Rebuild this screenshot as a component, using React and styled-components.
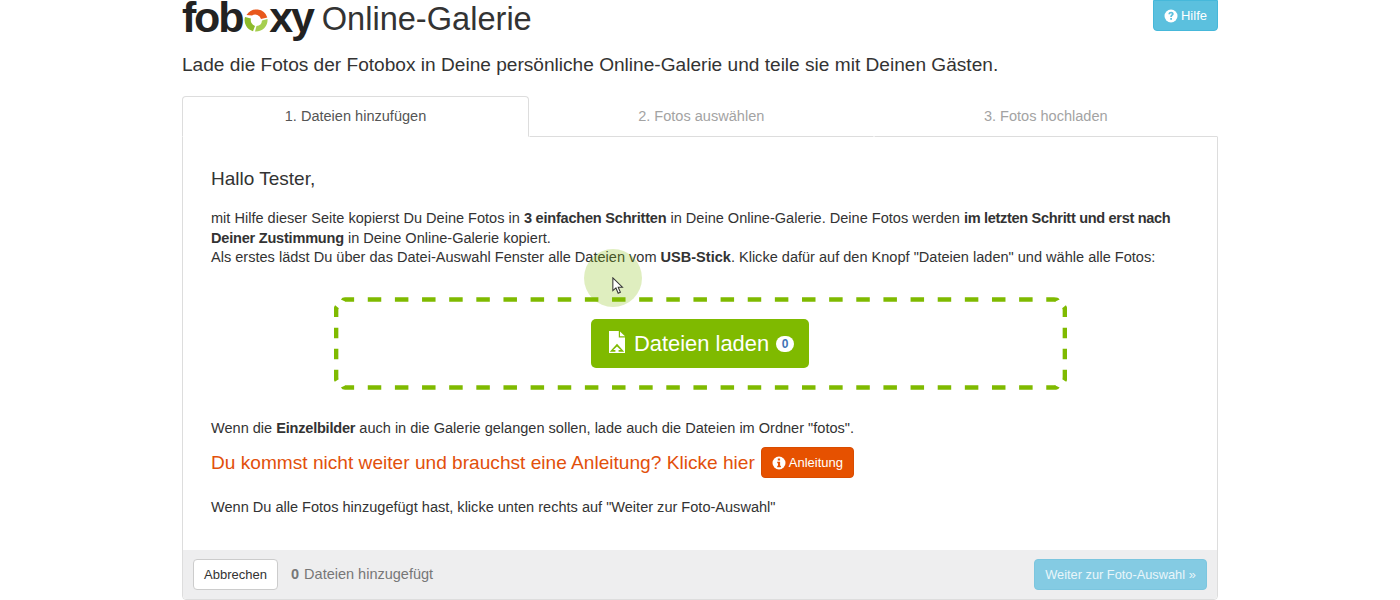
import React from 'react';
import styled, { createGlobalStyle } from 'styled-components';

const GlobalStyle = createGlobalStyle`
  html, body {
    margin: 0;
    padding: 0;
    background: #fff;
    overflow: hidden;
  }
  body {
    font-family: "Liberation Sans", Arial, sans-serif;
    font-size: 14.55px;
    line-height: 19.6px;
    color: #333;
  }
`;

const Page = styled.div`
  position: relative;
  width: 1036px;
  height: 600px;
  margin: 0 auto;
`;

const Header = styled.header`
  display: flex;
  justify-content: space-between;
  align-items: flex-start;
  height: 41px;
`;

const Brand = styled.div`
  display: flex;
  align-items: flex-start;
  gap: 9px;
`;

const Logo = styled.span`
  display: inline-flex;
  align-items: baseline;
  margin-top: 1px;
  font-weight: 700;
  font-size: 43px;
  line-height: 32px;
  letter-spacing: -2.2px;
  color: #222;
`;

const LogoRing = styled.svg`
  width: 26px;
  height: 24px;
  margin: 0 0.5px;
`;

const Title = styled.h1`
  margin: 3px 0 0;
  font-weight: 400;
  font-size: 32.6px;
  line-height: 32px;
  color: #333;
`;

const BaseButton = styled.button`
  display: inline-flex;
  align-items: center;
  justify-content: center;
  font-family: inherit;
  box-sizing: border-box;
  border-radius: 4px;
  border: 1px solid transparent;
  padding: 0;
`;

const HelpButton = styled(BaseButton)`
  width: 65px;
  height: 31px;
  gap: 3px;
  border-radius: 0 0 4px 4px;
  background: #5bc0de;
  border-color: #46b8da;
  color: #fff;
  font-size: 13px;
`;

const Lead = styled.p`
  margin: 12px 0 0;
  font-size: 19.1px;
  line-height: 24px;
  color: #333;
`;

const Tabs = styled.div`
  display: grid;
  grid-template-columns: 347px 1fr 1fr;
  margin-top: 19px;
  height: 41px;
`;

const Tab = styled.div`
  display: flex;
  align-items: center;
  justify-content: center;
  box-sizing: border-box;
  color: ${(p) => (p.$active ? '#555' : '#a3a3a3')};
  background: #fff;
  border: 1px solid ${(p) => (p.$active ? '#ddd' : 'transparent')};
  border-bottom: 1px solid ${(p) => (p.$active ? '#fff' : '#ddd')};
  border-radius: ${(p) => (p.$active ? '4px 4px 0 0' : '0')};
  position: relative;
  z-index: 1;
`;

const Panel = styled.section`
  box-sizing: border-box;
  height: 464px;
  margin-top: -1px;
  border: 1px solid #ddd;
  border-radius: 0 0 4px 4px;
  display: flex;
  flex-direction: column;
`;

const PanelBody = styled.div`
  flex: 1;
  padding: 30px 28px 0;
`;

const Greeting = styled.h3`
  margin: 0 0 18px;
  font-weight: 400;
  font-size: 19px;
  line-height: 24px;
  color: #333;
`;

const Paragraph = styled.p`
  margin: 0;
`;

const Strong = styled.b`
  letter-spacing: ${(p) => p.$spacing ?? -0.22}px;
`;

const DropZone = styled.div`
  position: relative;
  display: flex;
  align-items: center;
  justify-content: center;
  width: 733px;
  height: 93px;
  margin: 29px auto;
`;

const DashFrame = styled.svg`
  position: absolute;
  inset: 0;
  width: 100%;
  height: 100%;
  fill: none;
  stroke: #7fba00;
  stroke-width: 4.7;
`;

const LoadButton = styled(BaseButton)`
  position: relative;
  justify-content: flex-start;
  width: 218px;
  height: 49px;
  gap: 7px;
  padding: 2px 0 0 17.5px;
  border: 0;
  border-radius: 5px;
  background: #7fba00;
  color: #fff;
  font-size: 21.9px;
`;

const Counter = styled.span`
  display: inline-flex;
  align-items: center;
  justify-content: center;
  width: 18px;
  height: 16px;
  border-radius: 8px;
  background: #fff;
  color: #3f73b5;
  font-size: 12px;
  font-weight: 700;
`;

const GuideRow = styled.div`
  display: flex;
  align-items: center;
  gap: 6px;
  margin-top: 9px;
  color: #e2500b;
  font-size: 19.13px;
  line-height: 31px;
`;

const GuideButton = styled(BaseButton)`
  width: 93px;
  height: 31px;
  gap: 3px;
  background: #e65100;
  border-color: #d94c00;
  color: #fff;
  font-size: 13px;
`;

const Closing = styled.p`
  margin: 20px 0 0;
`;

const Footer = styled.footer`
  display: flex;
  align-items: center;
  box-sizing: border-box;
  height: 49px;
  padding: 0 10px;
  background: #eeeeef;
  border-radius: 0 0 4px 4px;
`;

const CancelButton = styled(BaseButton)`
  width: 85px;
  height: 31px;
  background: #fff;
  border-color: #ccc;
  color: #333;
  font-size: 13px;
`;

const FileCount = styled.span`
  margin-left: 13px;
  color: #777;
  font-size: 14.5px;

  b {
    margin-right: 1px;
  }
`;

const NextButton = styled(BaseButton)`
  width: 173px;
  height: 31px;
  margin-left: auto;
  background: #84cbe3;
  border-color: #7cc6df;
  color: #e9f6fa;
  font-size: 12.8px;
`;

const ClickHalo = styled.div`
  position: absolute;
  left: 402px;
  top: 249px;
  width: 58px;
  height: 58px;
  border-radius: 50%;
  background: rgba(127, 186, 0, 0.25);
  pointer-events: none;
  z-index: 2;
`;

const Pointer = styled.svg`
  position: absolute;
  left: 430px;
  top: 277px;
  width: 12px;
  height: 18px;
  pointer-events: none;
  z-index: 3;
`;

const Glyph = styled.svg`
  width: ${(p) => p.$w}px;
  height: ${(p) => p.$h}px;
  margin: ${(p) => p.$margin || 0};
  flex: none;
`;

// round badge used by the help and guide buttons
const BadgeIcon = ({ mark }) => (
  <Glyph $w={14} $h={14} viewBox="0 0 14 14">
    <circle cx="7" cy="7" r="6.5" fill="#fff" />
    {mark === 'info' ? (
      <path d="M5.8 2.6h2.3v2H5.8zM5.2 5.8h2.9v4h.8v1.5H5.2V9.8h.8v-2.5h-.8z" fill="#e65100" />
    ) : (
      <path
        d="M4.4 5.2c.1-1.6 1.2-2.4 2.7-2.4s2.6.9 2.6 2.1c0 1.6-1.8 1.7-1.8 3H6.2c0-2 1.6-2 1.6-2.9 0-.4-.3-.7-.8-.7s-.8.3-.9 1zM6.2 9h1.8v1.8H6.2z"
        fill="#5bc0de"
      />
    )}
  </Glyph>
);

const FileUpIcon = () => (
  <Glyph $w={16} $h={22} $margin="-5px 2.5px 0 0" viewBox="0 0 16 22">
    <path fill="#fff" d="M0 0h9.8v6.6H16V22H0z" />
    <path fill="#fff" d="M11 .4 16 5.2h-5z" />
    <path fill="#7fba00" d="M.8 20.8 8 12.8l7.2 8z" />
    <path fill="#fff" d="M8 15.4 11.8 19H9.6v3H6.4v-3H4.2z" />
  </Glyph>
);

const App = () => {
  return (
    <>
      <GlobalStyle />
      <Page>
        <Header>
          <Brand>
            <Logo>
              fob
              <LogoRing viewBox="0 0 26 24">
                <path d="M3.5 7A11.5 11.5 0 0 1 24.3 9.5L18 11A6 6 0 0 0 9 7.6Z" fill="#e8591c" />
                <path d="M2 9 8 10.5A6 6 0 0 0 12 17.9L10 23.2A11.5 11.5 0 0 1 2 9Z" fill="#8dbb2a" />
                <path d="M24.5 11A11.5 11.5 0 0 1 12 23.5L13.5 18A6 6 0 0 0 19 12.5Z" fill="#a6cf50" />
              </LogoRing>
              xy
            </Logo>
            <Title>Online-Galerie</Title>
          </Brand>
          <HelpButton>
            <BadgeIcon mark="help" />
            Hilfe
          </HelpButton>
        </Header>
        <Lead>Lade die Fotos der Fotobox in Deine persönliche Online-Galerie und teile sie mit Deinen Gästen.</Lead>
        <Tabs>
          <Tab $active>1. Dateien hinzufügen</Tab>
          <Tab>2. Fotos auswählen</Tab>
          <Tab>3. Fotos hochladen</Tab>
        </Tabs>
        <Panel>
          <PanelBody>
            <Greeting>Hallo Tester,</Greeting>
            <Paragraph>
              mit Hilfe dieser Seite kopierst Du Deine Fotos in <Strong>3 einfachen Schritten</Strong> in Deine
              Online-Galerie. Deine Fotos werden <Strong $spacing={-0.32}>im letzten Schritt und erst nach</Strong>{' '}
              <Strong>Deiner Zustimmung</Strong> in Deine Online-Galerie kopiert.
              <br />
              Als erstes lädst Du über das Datei-Auswahl Fenster alle Dateien vom{' '}
              <Strong $spacing={0}>USB-Stick</Strong>. Klicke dafür auf den Knopf "Dateien laden" und wähle alle Fotos:
            </Paragraph>
            <DropZone>
              <DashFrame viewBox="0 0 733 93">
                <path strokeDasharray="13.5 13.64" strokeDashoffset="2.14" d="M9 3.5Q9.5 2.5 11 2.5H720Q723 2.5 723.5 3.5" />
                <path strokeDasharray="13.5 13.64" strokeDashoffset="2.14" d="M9 89.5Q9.5 90.5 11 90.5H720Q723 90.5 723.5 89.5" />
                <path strokeDasharray="10.5 10.6" d="M3 9.7Q2 11 2 13V80Q2 83 3.2 84" />
                <path strokeDasharray="10.5 10.6" d="M730 9.7Q731 11 731 13V80Q731 83 729.8 84" />
              </DashFrame>
              <LoadButton>
                <FileUpIcon />
                Dateien laden
                <Counter>0</Counter>
              </LoadButton>
            </DropZone>
            <Paragraph>
              Wenn die <Strong>Einzelbilder</Strong> auch in die Galerie gelangen sollen, lade auch die Dateien im Ordner
              "fotos".
            </Paragraph>
            <GuideRow>
              Du kommst nicht weiter und brauchst eine Anleitung? Klicke hier
              <GuideButton>
                <BadgeIcon mark="info" />
                Anleitung
              </GuideButton>
            </GuideRow>
            <Closing>Wenn Du alle Fotos hinzugefügt hast, klicke unten rechts auf "Weiter zur Foto-Auswahl"</Closing>
          </PanelBody>
          <Footer>
            <CancelButton>Abbrechen</CancelButton>
            <FileCount>
              <b>0</b> Dateien hinzugefügt
            </FileCount>
            <NextButton>Weiter zur Foto-Auswahl »</NextButton>
          </Footer>
        </Panel>
        <ClickHalo />
        <Pointer viewBox="0 0 14 21">
          <path d="M1 1v15l3.6-3.2 2.6 6.2 2.6-1.1-2.6-6h5z" fill="#fff" stroke="#333" strokeWidth="1.2" />
        </Pointer>
      </Page>
    </>
  );
};

export default App;
